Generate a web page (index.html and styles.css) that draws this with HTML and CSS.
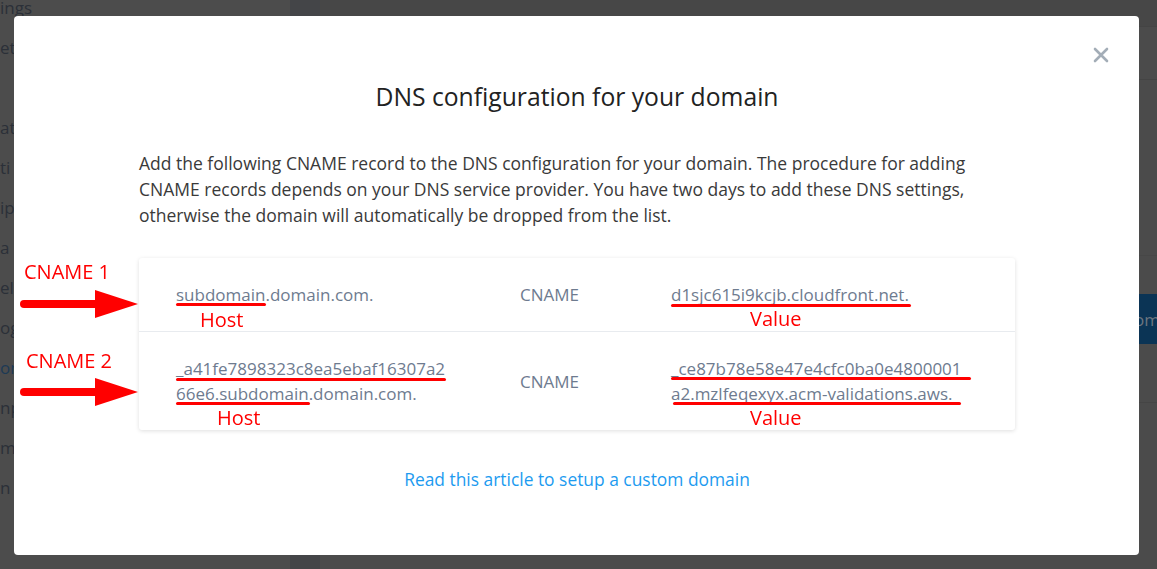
FILE: index.html
```html
<!DOCTYPE html>
<html lang="en">
<head>
<meta charset="UTF-8">
<meta name="viewport" content="width=device-width, initial-scale=1.0">
<title>DNS configuration</title>
<link rel="stylesheet" href="styles.css">
</head>
<body>

<!-- App behind the dialog -->
<div class="app">
    <aside class="sidebar">
        <span class="nav-item">ings</span>
        <span class="nav-item">ett</span>
        <span class="nav-item"></span>
        <span class="nav-item">at</span>
        <span class="nav-item">ti</span>
        <span class="nav-item">ip</span>
        <span class="nav-item">a</span>
        <span class="nav-item">el</span>
        <span class="nav-item">og</span>
        <span class="nav-item active">om</span>
        <span class="nav-item">np</span>
        <span class="nav-item">m</span>
        <span class="nav-item">n</span>
    </aside>
    <div class="gutter"></div>
    <main class="content">
        <div class="topbar"></div>
        <div class="toolbar"></div>
        <div class="panel">
            <button class="btn-primary">Add custom domain</button>
        </div>
    </main>
</div>

<!-- Dialog -->
<div class="overlay">
    <div class="modal">
        <span class="close">
            <svg width="16" height="16" viewBox="0 0 16 16">
                <path d="M2 2 L14 14 M14 2 L2 14" stroke="#a3adb7" stroke-width="2.6" stroke-linecap="round"/>
            </svg>
        </span>

        <h2 class="modal-title">DNS configuration for your domain</h2>

        <p class="modal-text">Add the following CNAME record to the DNS configuration for your domain. The procedure for adding CNAME records depends on your DNS service provider. You have two days to add these DNS settings, otherwise the domain will automatically be dropped from the list.</p>

        <div class="records">
            <div class="record">
                <span class="record-host">subdomain.domain.com.</span>
                <span class="record-type">CNAME</span>
                <span class="record-value">d1sjc615i9kcjb.cloudfront.net.</span>
            </div>
            <div class="record">
                <span class="record-host">_a41fe7898323c8ea5ebaf16307a266e6.subdomain.domain.com.</span>
                <span class="record-type">CNAME</span>
                <span class="record-value">_ce87b78e58e47e4cfc0ba0e4800001a2.mzlfeqexyx.acm-validations.aws.</span>
            </div>
        </div>

        <a class="help-link" href="#">Read this article to setup a custom domain</a>
    </div>
</div>

<!-- Red annotations drawn over the screenshot -->
<div class="notes">
    <span class="note-title note-1">CNAME 1</span>
    <svg class="note-arrow arrow-1" width="122" height="30" viewBox="0 0 122 30">
        <line x1="4" y1="15" x2="80" y2="15" stroke="#ff0000" stroke-width="8" stroke-linecap="round"/>
        <polygon points="75,1 118,15 75,29" fill="#ff0000"/>
    </svg>
    <span class="note-title note-2">CNAME 2</span>
    <svg class="note-arrow arrow-2" width="122" height="30" viewBox="0 0 122 30">
        <line x1="4" y1="15" x2="80" y2="15" stroke="#ff0000" stroke-width="8" stroke-linecap="round"/>
        <polygon points="75,1 118,15 75,29" fill="#ff0000"/>
    </svg>

    <span class="mark" style="left:176px; top:303px; width:90px;"></span>
    <span class="mark" style="left:671px; top:304px; width:240px;"></span>
    <span class="mark" style="left:176px; top:378px; width:270px;"></span>
    <span class="mark" style="left:176px; top:402px; width:134px;"></span>
    <span class="mark" style="left:671px; top:377px; width:300px;"></span>
    <span class="mark" style="left:673px; top:402px; width:288px;"></span>

    <span class="note-label" style="left:200px; top:306px;">Host</span>
    <span class="note-label" style="left:750px; top:305px;">Value</span>
    <span class="note-label" style="left:217px; top:404px;">Host</span>
    <span class="note-label" style="left:750px; top:404px;">Value</span>
</div>

</body>
</html>
```

FILE: styles.css
```css
/* PAGE */
body {
    margin: 0;
    padding: 0;
    font-family: "Open Sans", Lato, sans-serif;
    background-color: #4b4b4b;
    overflow: hidden;
}

/* APP BEHIND THE DIALOG (dimmed) */
.app {
    display: flex;
    height: 569px;
}
.sidebar {
    width: 290px;
    display: flex;
    flex-direction: column;
    margin-top: -12px;
    background-color: #4c4c4c;
}
.nav-item {
    display: block;
    height: 40px;
    line-height: 40px;
    font-size: 17px;
    color: #2b3038;
    white-space: nowrap;
}
.nav-item.active {
    color: #1d3a55;
}
.gutter {
    width: 30px;
    background-color: #444548;
}
.content {
    flex: 1;
    display: flex;
    flex-direction: column;
}
.topbar {
    height: 26px;
    background-color: #474747;
    border-bottom: 1px solid #444;
}
.toolbar {
    height: 52px;
    border-bottom: 1px solid #444;
}
.panel {
    margin-top: 175px;
    height: 148px;
    border-top: 1px solid #474747;
    border-bottom: 1px solid #454545;
    display: flex;
    justify-content: flex-end;
    align-items: flex-start;
    padding-top: 38px;
    box-sizing: border-box;
}
.btn-primary {
    height: 50px;
    padding: 0 16px;
    margin-right: -84px;
    border: none;
    background-color: #0b3455;
    color: #6d7680;
    font-family: "Open Sans", sans-serif;
    font-size: 17px;
    white-space: nowrap;
}

/* DIALOG */
.overlay {
    position: fixed;
    top: 0;
    left: 0;
    right: 0;
    bottom: 0;
    padding: 16px 0 0 14px;
}
.modal {
    position: relative;
    width: 1125px;
    height: 539px;
    box-sizing: border-box;
    padding: 65px 124px 0 125px;
    background-color: #fff;
    border-radius: 4px;
    display: flex;
    flex-direction: column;
}
.close {
    position: absolute;
    top: 30px;
    right: 30px;
    width: 16px;
    height: 16px;
    cursor: pointer;
}
.modal-title {
    margin: 0;
    font-size: 24.7px;
    line-height: 32px;
    font-weight: 400;
    text-align: center;
    color: #222;
}
.modal-text {
    margin: 37px 0 30px 0;
    font-size: 17.5px;
    line-height: 26px;
    color: #3a3a3a;
}

/* RECORDS CARD */
.records {
    border-radius: 3px;
    box-shadow: 0 1px 4px rgba(0, 0, 0, 0.13);
    background-color: #fff;
}
.record {
    display: grid;
    grid-template-columns: 344px 151px 1fr;
    align-items: center;
    padding: 24px 37px;
    font-size: 17px;
    line-height: 25px;
    color: #6e7b8f;
}
.record + .record {
    border-top: 1px solid #e8ebef;
}
.record-host {
    width: 276px;
    word-break: break-all;
}
.record-value {
    width: 296px;
    word-break: break-all;
}

.help-link {
    margin-top: 37px;
    align-self: center;
    font-size: 17.4px;
    line-height: 25px;
    color: #1d9bf0;
    text-decoration: none;
}

/* ANNOTATIONS */
.notes {
    position: absolute;
    top: 0;
    left: 0;
    width: 1157px;
    height: 569px;
    pointer-events: none;
    font-family: "Open Sans", "Noto Sans", sans-serif;
    color: #ff0000;
}
.note-title {
    position: absolute;
    font-size: 20px;
    line-height: 28px;
}
.note-1 {
    left: 24px;
    top: 258px;
}
.note-2 {
    left: 26px;
    top: 347px;
}
.note-arrow {
    position: absolute;
    left: 20px;
}
.arrow-1 {
    top: 289px;
}
.arrow-2 {
    top: 377px;
}
.mark {
    position: absolute;
    height: 3px;
    border-radius: 2px;
    background-color: #ff0000;
}
.note-label {
    position: absolute;
    font-size: 20px;
    line-height: 28px;
}
```
